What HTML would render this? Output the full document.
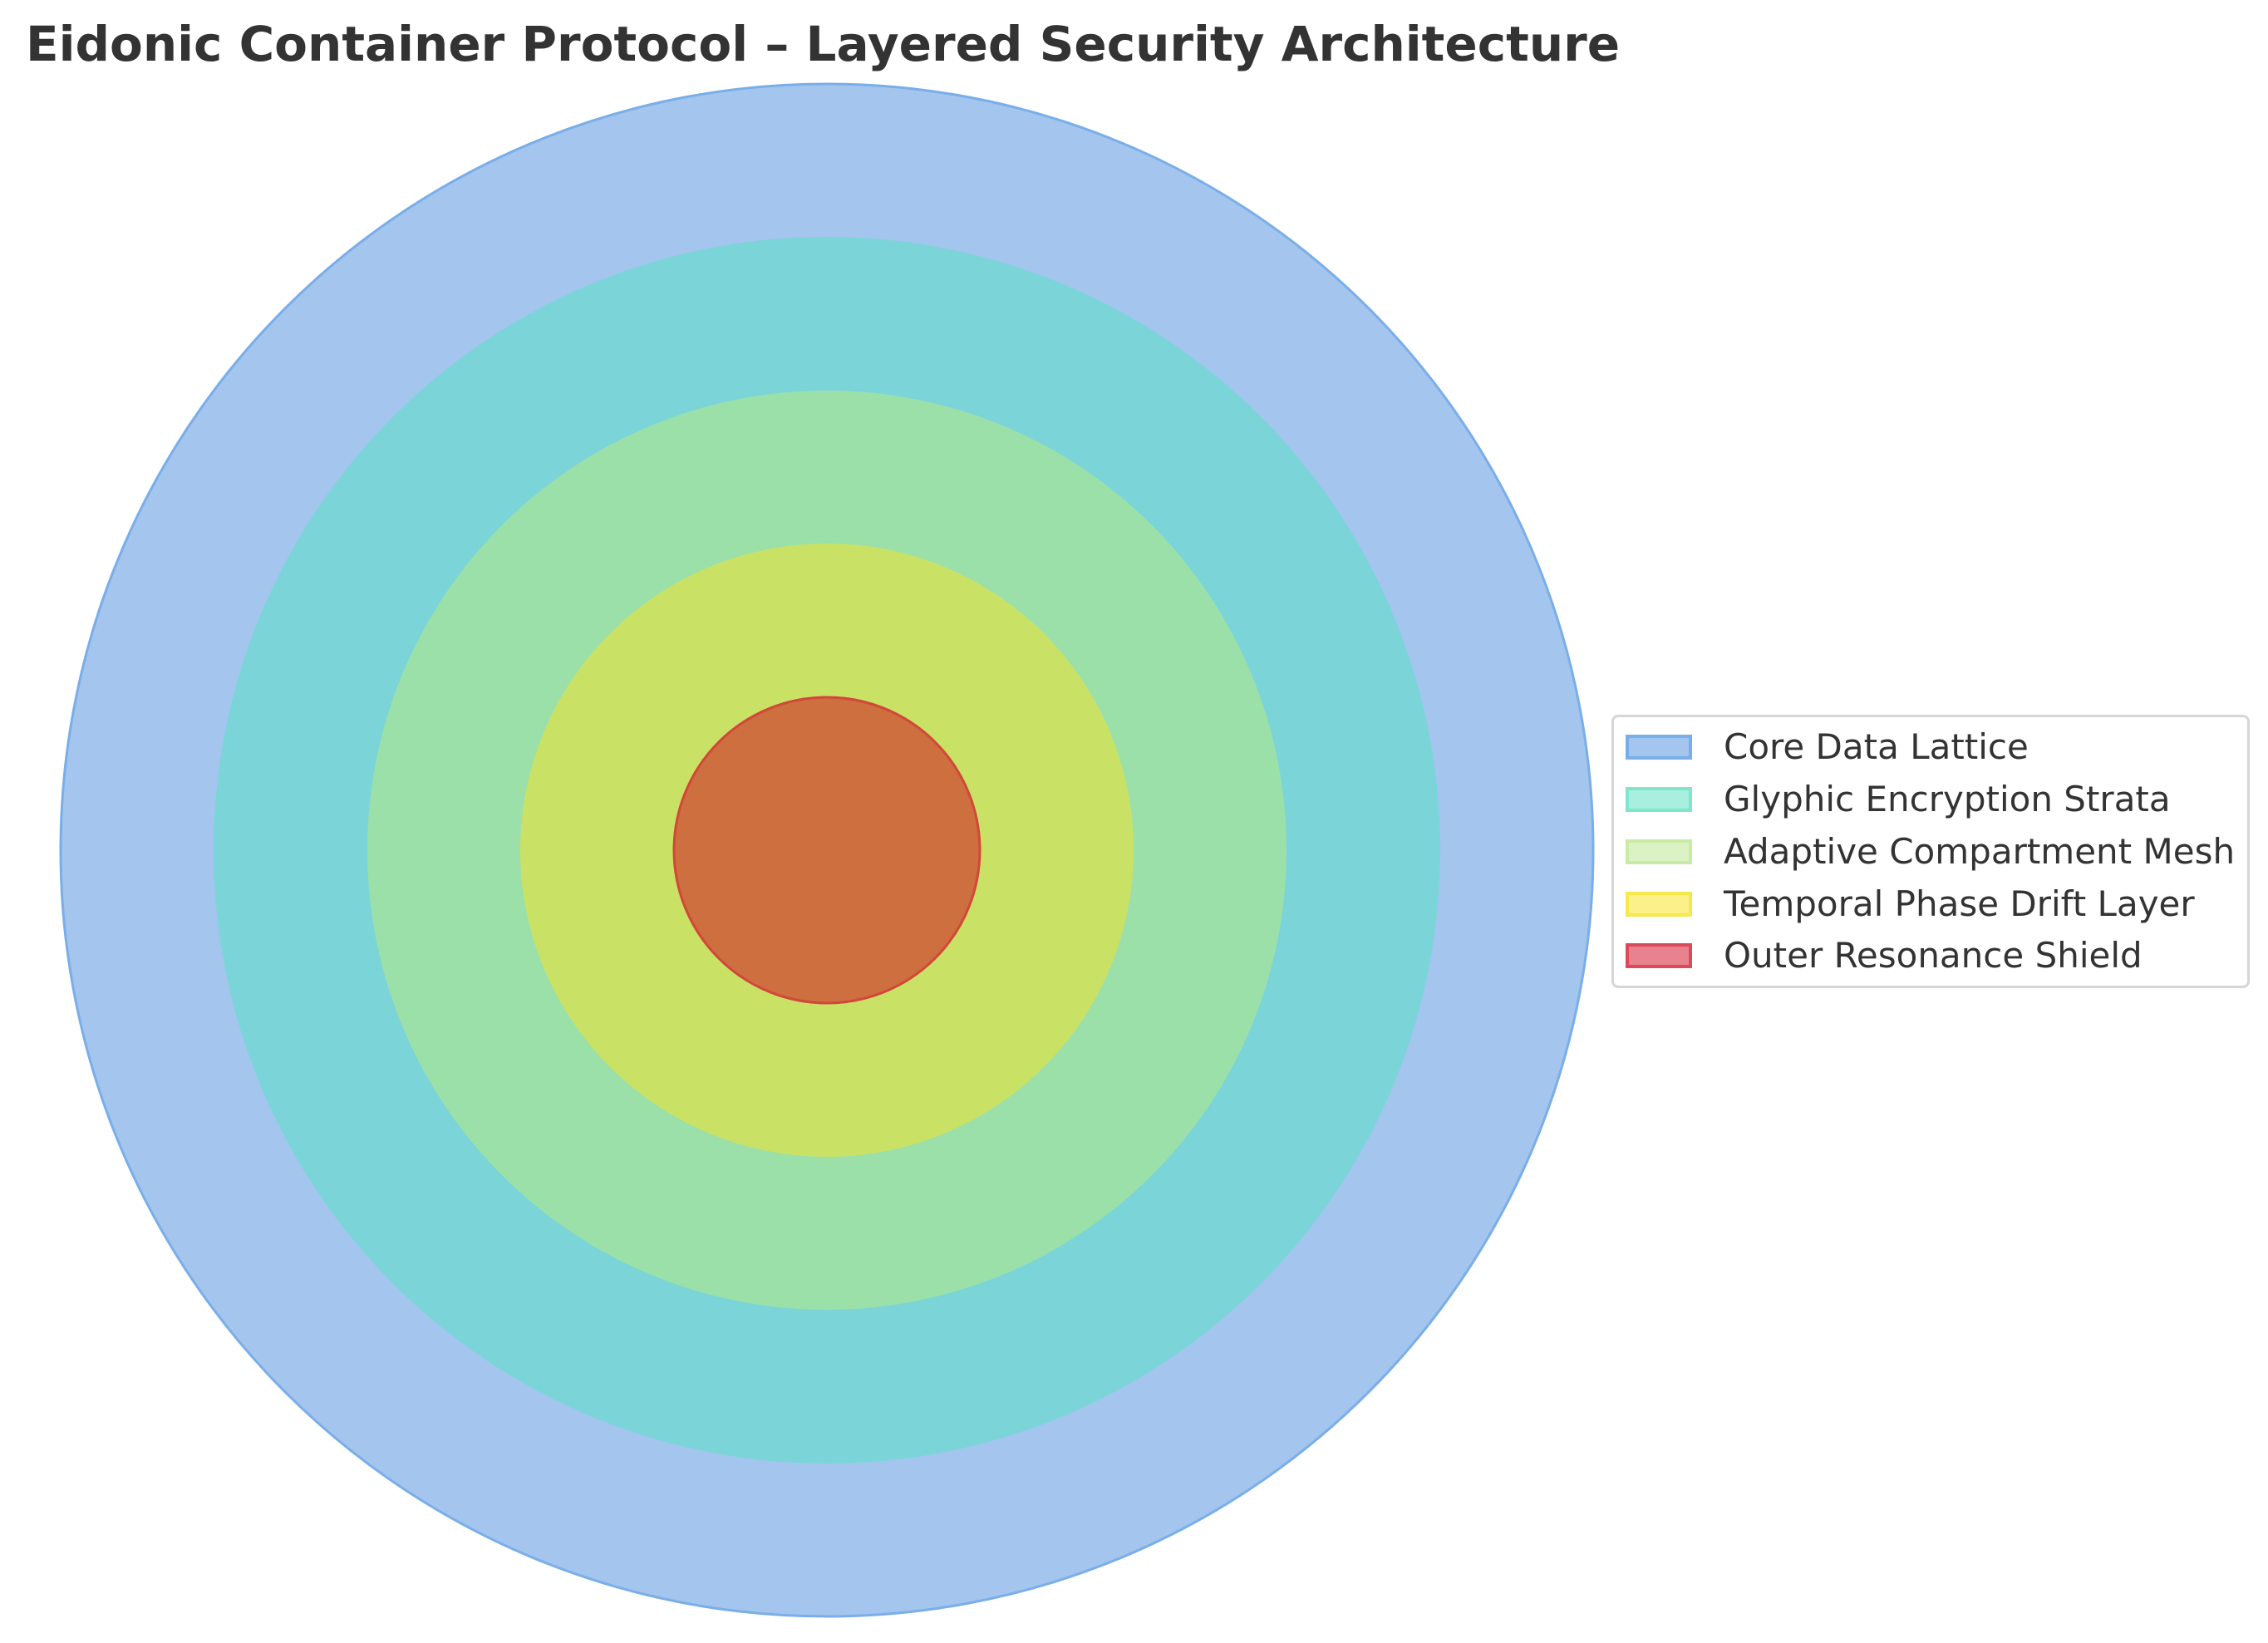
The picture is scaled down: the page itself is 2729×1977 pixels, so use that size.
<!DOCTYPE html>
<html><head><meta charset="utf-8"><style>
html,body{margin:0;padding:0;background:#fff;}
body{width:2729px;height:1977px;position:relative;overflow:hidden;font-family:"DejaVu Sans","Liberation Sans",sans-serif;}
.t{position:absolute;left:31px;top:19px;font-size:58px;font-weight:bold;color:#333;white-space:nowrap;}
.lg{position:absolute;left:1939px;top:860px;width:768px;height:329px;border:3px solid #d6d6d6;border-radius:8px;box-sizing:border-box;background:#fff;}
.r{position:absolute;left:14px;height:63px;display:flex;align-items:center;font-size:42px;color:#333;white-space:nowrap;}
.p{width:80px;height:30px;margin-right:38px;box-sizing:border-box;border:4px solid;}
</style></head><body>
<div class="t">Eidonic Container Protocol – Layered Security Architecture</div>
<svg width="2729" height="1977" style="position:absolute;left:0;top:0">
<circle cx="995" cy="1023" r="922" fill="#a3c5ee" stroke="#7aaee8" stroke-width="3"/>
<circle cx="995" cy="1023" r="738" fill="#7bd5d8"/>
<circle cx="995" cy="1023" r="553" fill="#9be0a9"/>
<circle cx="995" cy="1023" r="369" fill="#c9e265"/>
<circle cx="995" cy="1023" r="184" fill="#cd6f3e" stroke="#d2473a" stroke-width="3"/>
</svg>
<div class="lg">
<div class="r" style="top:4px"><div class="p" style="background:#a3c5ee;border-color:#7aaee8"></div>Core Data Lattice</div>
<div class="r" style="top:67px"><div class="p" style="background:#a8efe0;border-color:#7fe5cc"></div>Glyphic Encryption Strata</div>
<div class="r" style="top:130px"><div class="p" style="background:#daf2c4;border-color:#c8eca6"></div>Adaptive Compartment Mesh</div>
<div class="r" style="top:193px"><div class="p" style="background:#fbf08a;border-color:#f7e84c"></div>Temporal Phase Drift Layer</div>
<div class="r" style="top:255px"><div class="p" style="background:#e8828e;border-color:#db4a5a"></div>Outer Resonance Shield</div>
</div>
</body></html>
